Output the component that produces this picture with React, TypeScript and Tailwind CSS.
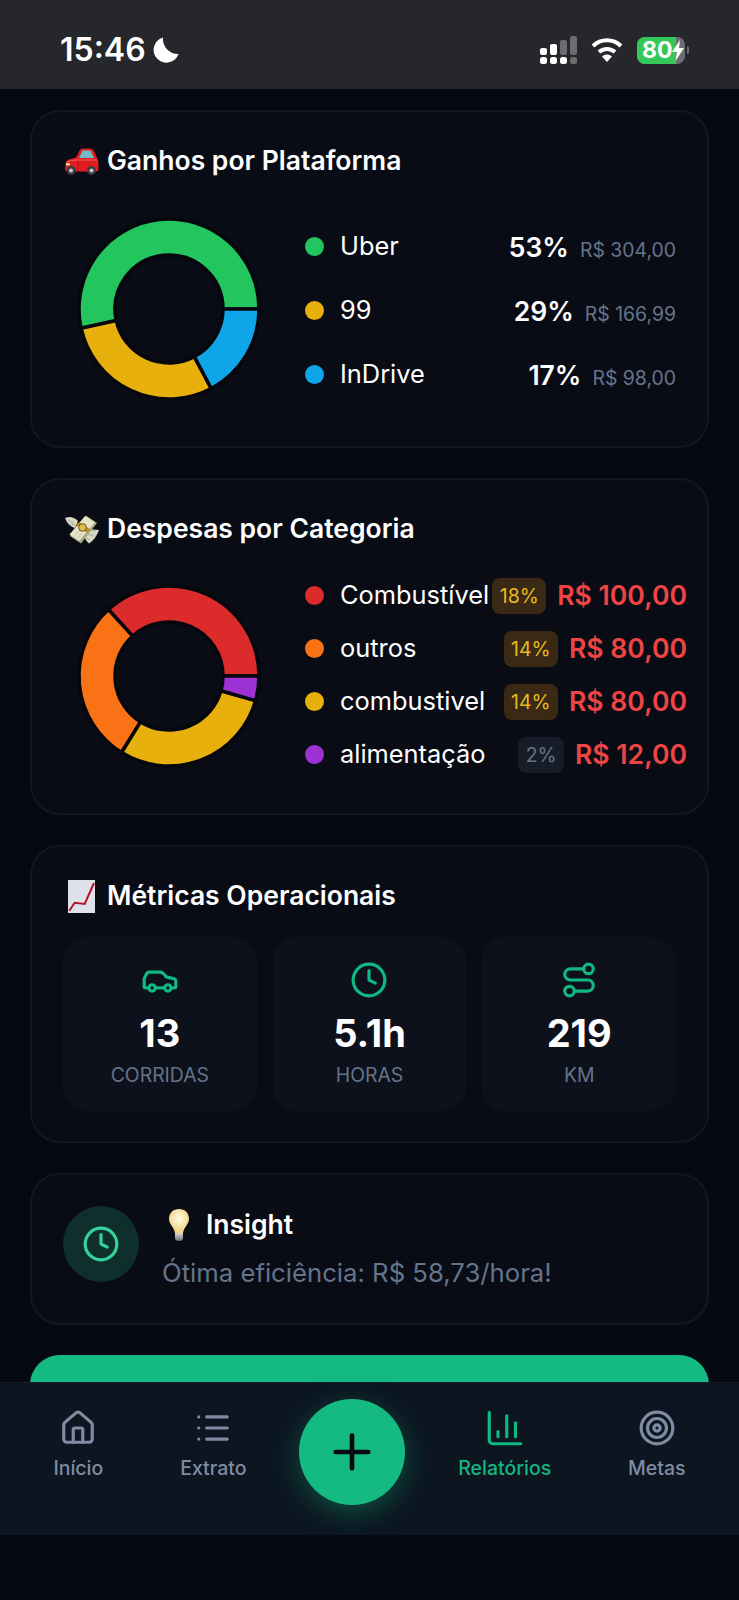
import { Car, ChartColumn, Clock, House, List, Plus, Route, Target } from 'lucide-react';
import type { ReactNode } from 'react';

// ── Data ─────────────────────────────────────
type Slice = { label: string; value: number; color: string };

const platforms: (Slice & { pct: string; amount: string })[] = [
  { label: 'Uber', value: 304, color: '#22c55e', pct: '53%', amount: 'R$ 304,00' },
  { label: '99', value: 166.99, color: '#e8b00c', pct: '29%', amount: 'R$ 166,99' },
  { label: 'InDrive', value: 98, color: '#0ea5e9', pct: '17%', amount: 'R$ 98,00' },
];

const expenses: (Slice & { pct: string; amount: string; warn: boolean })[] = [
  { label: 'Combustível', value: 100, color: '#dc2b2b', pct: '18%', amount: 'R$ 100,00', warn: true },
  { label: 'outros', value: 80, color: '#f97316', pct: '14%', amount: 'R$ 80,00', warn: true },
  { label: 'combustivel', value: 80, color: '#e8b00c', pct: '14%', amount: 'R$ 80,00', warn: true },
  { label: 'alimentação', value: 12, color: '#9d32d4', pct: '2%', amount: 'R$ 12,00', warn: false },
];

// ── Donut ────────────────────────────────────
function sector(start: number, end: number) {
  const c = 107;
  const R = 90;
  const r = 54;
  const pt = (rad: number, a: number) => {
    const t = (a * Math.PI) / 180;
    return `${(c + rad * Math.cos(t)).toFixed(2)} ${(c - rad * Math.sin(t)).toFixed(2)}`;
  };
  const large = end - start > 180 ? 1 : 0;
  return `M${pt(R, start)} A${R} ${R} 0 ${large} 0 ${pt(R, end)} L${pt(r, end)} A${r} ${r} 0 ${large} 1 ${pt(r, start)} Z`;
}

function Donut({ data }: { data: Slice[] }) {
  const total = data.reduce((s, d) => s + d.value, 0);
  let angle = 0;
  return (
    <svg width={214} height={214} viewBox="0 0 214 214" className="shrink-0">
      {data.map(d => {
        const start = angle;
        angle += (d.value / total) * 360;
        return <path key={d.label} d={sector(start, angle)} fill={d.color} stroke="#05070c" strokeWidth={3.5} />;
      })}
    </svg>
  );
}

// ── Emoji drawings ───────────────────────────
const CarEmoji = () => (
  <svg width={35} height={27} viewBox="0 0 35 27">
    <path d="M1 20 Q1 13 5 11.5 L12 9.5 L15.5 2.5 Q16.5 0.5 19 0.5 H26 Q29 0.5 30 3 L33.5 11 Q34.5 13 34.5 17 V21 Q34.5 23.5 32 23.5 H3 Q1 23.5 1 21 Z" fill="#dd1d1f" />
    <path d="M15 10 L18.5 2.5 H26.5 L30 10 Z" fill="#74bcc4" />
    <path d="M2 14 Q8 12 12 12 H33" fill="none" stroke="#f2595a" strokeWidth="1" />
    <rect x="2" y="15" width="4" height="2.5" rx="1.2" fill="#ffe39a" />
    <path d="M14 13 V23" stroke="#a81416" strokeWidth="0.8" />
    <circle cx="7" cy="22.5" r="4.5" fill="#3b3b41" />
    <circle cx="27.5" cy="22.5" r="4.5" fill="#3b3b41" />
    <circle cx="7" cy="22.5" r="2" fill="#c9c9ce" />
    <circle cx="27.5" cy="22.5" r="2" fill="#c9c9ce" />
  </svg>
);

const MoneyEmoji = () => (
  <svg width={34} height={29} viewBox="0 0 34 29">
    <path d="M0 3 Q7 0 13 6 L10 13 Q3 11 0 3 Z" fill="#d9d8c2" />
    <path d="M34 15 Q31 24 24 28.5 Q20 25 19 20 L24 14 Z" fill="#d9d8c2" />
    <path d="M25 15 L31 16 M23 19 L29 21 M21 23 L25 25" stroke="#a3a28c" strokeWidth="0.8" />
    <path d="M3 5 L9 8 M5 9 L10 10" stroke="#a3a28c" strokeWidth="0.8" />
    <path d="M21 0.5 L32 8 L16 28.5 L5 21 Z" fill="#a8a886" />
    <path d="M20 1 L30 7.5 L14 26 L4.5 19.5 Z" fill="#e7e5c9" />
    <path d="M11 10 L14 7 L25.5 14.5 L22 18 Z" fill="#b58e24" />
    <circle cx="17.5" cy="12.5" r="3.8" fill="#e0bd52" stroke="#6d5212" strokeWidth="1" />
    <path d="M9 22 L14 16 M12 24 L17 18" stroke="#bdbb9f" strokeWidth="0.8" />
  </svg>
);

const ChartEmoji = () => (
  <svg width={27} height={33} viewBox="0 0 27 33">
    <rect x="0" y="0" width="27" height="33" fill="#dfe1ea" />
    <path d="M1.3 30.7 L6.7 22.7 L16.7 24 L26 3" fill="none" stroke="#b3132a" strokeWidth="2" />
  </svg>
);

const BulbEmoji = () => (
  <svg width={20} height={32} viewBox="0 0 20 32">
    <defs>
      <radialGradient id="bulb" cx="50%" cy="40%" r="60%">
        <stop offset="0%" stopColor="#fffbe6" />
        <stop offset="100%" stopColor="#efd07a" />
      </radialGradient>
      <linearGradient id="bulb-base" x1="0" y1="0" x2="0" y2="1">
        <stop offset="0%" stopColor="#d9d9d6" />
        <stop offset="100%" stopColor="#6e6e72" />
      </linearGradient>
    </defs>
    <path d="M10 0 C16 0 20 4 20 10 C20 15 15 18 14 24 H6 C5 18 0 15 0 10 C0 4 4 0 10 0 Z" fill="url(#bulb)" />
    <path d="M6 24 H14 V29 Q14 32 10 32 Q6 32 6 29 Z" fill="url(#bulb-base)" />
  </svg>
);

// ── Building blocks ──────────────────────────
function Card({ children, className = '' }: { children: ReactNode; className?: string }) {
  return (
    <section className={`shrink-0 rounded-[30px] border-2 border-[#121721] bg-[#090c14] p-[30px] ${className}`}>
      {children}
    </section>
  );
}

function CardTitle({ icon, children }: { icon: ReactNode; children: ReactNode }) {
  return (
    <div className="flex h-10 items-center gap-[6px] text-[26.5px] font-semibold text-white">
      <span className="flex w-[39px] justify-center">{icon}</span>
      {children}
    </div>
  );
}

function Metric({ icon, value, label }: { icon: ReactNode; value: string; label: string }) {
  return (
    <div className="flex h-[174px] flex-col items-center rounded-[24px] bg-[#0d111b] pt-[22px]">
      <div className="flex h-[42px] items-center text-[#10b981]">{icon}</div>
      <div className="mt-[7px] text-[38px] leading-[50px] font-bold text-white">{value}</div>
      <div className="mt-[3px] text-[19.4px] leading-7 text-[#64748b] uppercase">{label}</div>
    </div>
  );
}

function NavItem({ icon, label, active }: { icon: ReactNode; label: string; active?: boolean }) {
  return (
    <div className={`flex flex-col items-center px-[24px] ${active ? 'text-[#10b981]' : 'text-[#7f8ca3]'}`}>
      <div className="-mt-[1px] flex h-[38px] items-center">{icon}</div>
      <span className="mt-[7px] text-[19.5px] leading-7 font-medium">{label}</span>
    </div>
  );
}

// ── Status bar ───────────────────────────────
function StatusBar() {
  return (
    <header className="flex h-[89px] shrink-0 items-center justify-between bg-[#26272b] pt-[11px] pr-[50px] pl-[60px] text-white">
      <div className="flex items-center gap-[7px]">
        <span className="text-[32px] leading-none font-semibold">15:46</span>
        <svg width={26} height={26} viewBox="0 0 26 26" fill="#fff">
          <path d="M10 0.5 A12.8 12.8 0 1 0 25.5 17 A15 15 0 0 1 10 0.5 Z" />
        </svg>
      </div>
      <div className="flex items-center gap-[14px]">
        <svg width={38} height={28} viewBox="0 0 38 28">
          <rect x="1" y="12" width="7" height="7" rx="2" fill="#fff" />
          <rect x="11" y="8" width="7" height="11" rx="2" fill="#fff" />
          <rect x="21" y="4" width="7" height="15" rx="2" fill="#6c6d71" />
          <rect x="31" y="0" width="7" height="19" rx="2" fill="#6c6d71" />
          <rect x="1" y="21" width="7" height="7" rx="2.5" fill="#fff" />
          <rect x="11" y="21" width="7" height="7" rx="2.5" fill="#fff" />
          <rect x="21" y="21" width="7" height="7" rx="2.5" fill="#fff" />
          <rect x="31" y="21" width="7" height="7" rx="2.5" fill="#6c6d71" />
        </svg>
        <svg width={32} height={26} viewBox="0 0 32 26" fill="none" stroke="#fff" strokeWidth={4}>
          <path d="M2 9 A20 20 0 0 1 30 9" />
          <path d="M8 15 A12 12 0 0 1 24 15" />
          <path d="M16 25 L11 19.5 A7 7 0 0 1 21 19.5 Z" fill="#fff" stroke="none" />
        </svg>
        <div className="flex items-center gap-[2px]">
          <div className="relative flex h-[27px] w-[48px] items-center overflow-hidden rounded-[8px] bg-[#6c6d71]">
            <div className="absolute inset-y-0 left-0 w-[39px] bg-[#34c759]" />
            <span className="relative pl-[5px] text-[23px] leading-none font-bold">80</span>
            <svg width={12} height={21} viewBox="0 0 12 21" fill="#fff" className="relative">
              <path d="M8 0 L0 12 H5 L3.5 21 L12 8 H7 Z" />
            </svg>
          </div>
          <div className="h-2 w-[2px] rounded-r bg-[#6c6d71]" />
        </div>
      </div>
    </header>
  );
}

// ── App ──────────────────────────────────────
export default function App() {
  return (
    <div className="flex h-[1600px] w-[739px] flex-col overflow-hidden bg-[#060912] [font-family:Inter,sans-serif]">
      <StatusBar />

      <main className="flex min-h-0 flex-1 flex-col gap-[30px] overflow-hidden px-[30px] pt-[21px]">
        {/* Ganhos */}
        <Card className="h-[338px]">
          <div className="-mt-[1px]">
            <CardTitle icon={<CarEmoji />}>Ganhos por Plataforma</CardTitle>
          </div>
          <div className="mt-[21px] flex items-center gap-[29px]">
            <Donut data={platforms} />
            <ul className="flex flex-1 flex-col gap-[28px] pt-[5px] pr-[1px]">
              {platforms.map(p => (
                <li key={p.label} className="flex h-9 items-center">
                  <div className="flex flex-1 items-center pb-[3px]">
                    <span className="size-[19px] shrink-0 rounded-full" style={{ background: p.color }} />
                    <span className="ml-[16px] text-[25.4px] text-white">{p.label}</span>
                  </div>
                  <span className="flex items-baseline gap-[11px]">
                    <span className="text-[26.5px] font-semibold text-white">{p.pct}</span>
                    <span className="text-[19.4px] text-[#64748b]">{p.amount}</span>
                  </span>
                </li>
              ))}
            </ul>
          </div>
        </Card>

        {/* Despesas */}
        <Card className="h-[337px]">
          <div className="-mt-[1px]">
            <CardTitle icon={<MoneyEmoji />}>Despesas por Categoria</CardTitle>
          </div>
          <div className="mt-[20px] flex items-center gap-[29px]">
            <Donut data={expenses} />
            <ul className="mb-[2px] flex w-[382px] shrink-0 flex-col gap-[17px]">
              {expenses.map(e => (
                <li key={e.label} className="flex h-9 items-center">
                  <span className="size-[19px] shrink-0 rounded-full" style={{ background: e.color }} />
                  <span className="ml-[16px] flex-1 text-[25.4px] whitespace-nowrap text-white">{e.label}</span>
                  <span
                    className={`shrink-0 rounded-lg px-[7.5px] text-[19.4px] leading-9 ${
                      e.warn ? 'bg-[#3a2a15] text-[#e9b81e]' : 'bg-[#161c28] text-[#64748b]'
                    }`}
                  >
                    {e.pct}
                  </span>
                  <span className="ml-[11px] shrink-0 text-[26.6px] font-semibold whitespace-nowrap text-[#ef4444]">
                    {e.amount}
                  </span>
                </li>
              ))}
            </ul>
          </div>
        </Card>

        {/* Métricas */}
        <Card className="h-[298px]">
          <div className="-mt-[1px]">
            <CardTitle icon={<ChartEmoji />}>Métricas Operacionais</CardTitle>
          </div>
          <div className="mx-[1px] mt-[21px] grid grid-cols-3 gap-[16px]">
            <Metric icon={<Car size={38} />} value="13" label="Corridas" />
            <Metric icon={<Clock size={38} />} value="5.1h" label="Horas" />
            <Metric icon={<Route size={38} />} value="219" label="KM" />
          </div>
        </Card>

        {/* Insight */}
        <Card className="flex h-[152px] items-start gap-[24px]">
          <div className="mt-[1px] ml-[1px] flex size-[76px] shrink-0 items-center justify-center rounded-full bg-[#0e2f2c] text-[#34d399]">
            <Clock size={38} />
          </div>
          <div>
            <div className="flex h-[40px] items-center gap-[17px] pl-[6px] text-[26.5px] font-semibold text-white">
              <BulbEmoji />
              Insight
            </div>
            <p className="mt-[10px] -ml-[1px] text-[25.7px] leading-9 text-[#64748b]">Ótima eficiência: R$ 58,73/hora!</p>
          </div>
        </Card>

        <div className="h-[80px] shrink-0 rounded-[30px] bg-[#14ba82]" />
      </main>

      {/* Bottom navigation */}
      <nav className="flex h-[153px] shrink-0 justify-around border-t border-[#141c28] bg-[#0c1520] px-[15px] pt-[27px]">
        <NavItem icon={<House size={38} />} label="Início" />
        <NavItem icon={<List size={38} />} label="Extrato" />
        <div className="-mt-[11px] flex size-[106px] shrink-0 items-center justify-center rounded-full bg-[#14ba82] text-[#060912] shadow-[0_8px_30px_rgba(16,185,129,0.35)]">
          <Plus size={56} />
        </div>
        <NavItem icon={<ChartColumn size={42} strokeWidth={1.8} />} label="Relatórios" active />
        <NavItem icon={<Target size={38} />} label="Metas" />
      </nav>
      <div className="h-[65px] shrink-0 bg-[#060912]" />
    </div>
  );
}
